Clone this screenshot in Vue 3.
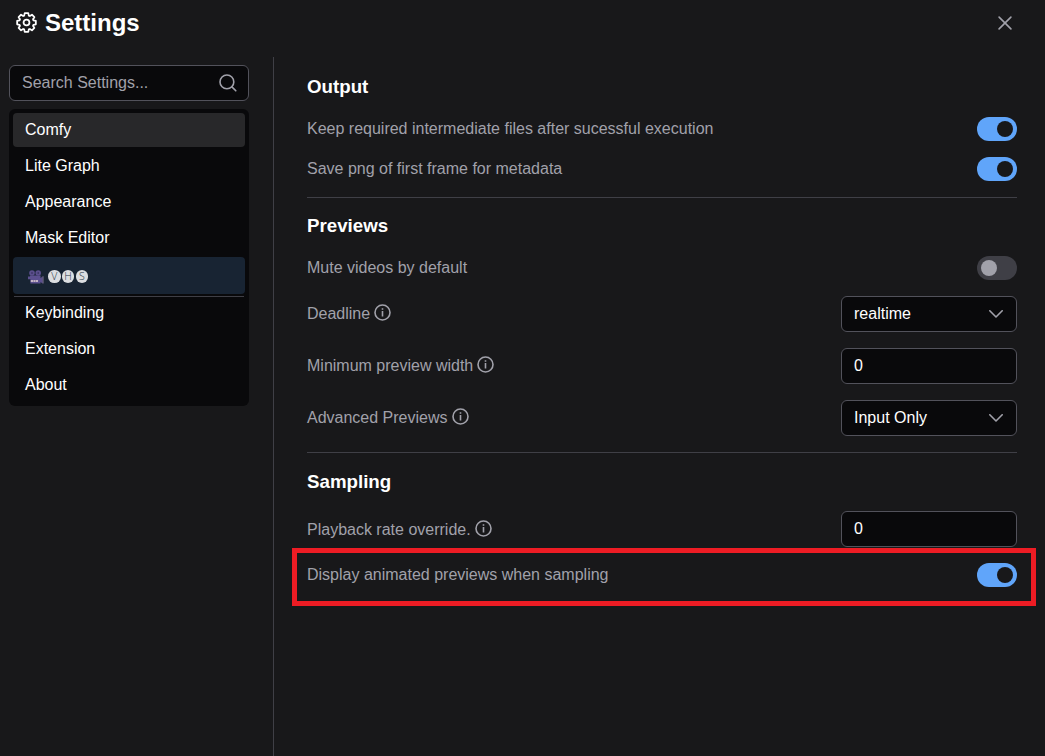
<script setup>
const before = ['Comfy', 'Lite Graph', 'Appearance', 'Mask Editor']
const after = ['Keybinding', 'Extension', 'About']
const groups = [
  {
    title: 'Output',
    rows: [
      { label: 'Keep required intermediate files after sucessful execution', type: 'toggle', on: true },
      { label: 'Save png of first frame for metadata', type: 'toggle', on: true },
    ],
  },
  {
    title: 'Previews',
    rows: [
      { label: 'Mute videos by default', type: 'toggle', on: false },
      { label: 'Deadline', type: 'select', value: 'realtime', info: true },
      { label: 'Minimum preview width', type: 'input', value: '0', info: true },
      { label: 'Advanced Previews', type: 'select', value: 'Input Only', info: true },
    ],
  },
  {
    title: 'Sampling',
    rows: [
      { label: 'Playback rate override.', type: 'input', value: '0', info: true },
      { label: 'Display animated previews when sampling', type: 'toggle', on: true, marked: true },
    ],
  },
]
</script>

<template>
  <div class="dialog">
    <header class="header">
      <svg class="gear" viewBox="0 0 20 20" fill="none" stroke="#fff" stroke-width="1.7" stroke-linejoin="round">
        <path d="M8.3 1.1h3.4l.5 2.3 1 .4 2-1.2 2.3 2.3-1.3 2 .4 1 2.3.5v3.3l-2.3.5-.4 1 1.3 2-2.3 2.3-2-1.3-1 .4-.5 2.3H8.3l-.5-2.3-1-.4-2 1.3-2.3-2.3 1.3-2-.4-1-2.3-.5V8.4l2.3-.5.4-1-1.3-2 2.3-2.3 2 1.2 1-.4z" />
        <circle cx="10" cy="10" r="2.8" />
      </svg>
      <h2 class="title">Settings</h2>
      <svg class="close" viewBox="0 0 14 14" fill="none" stroke="#a1a1aa" stroke-width="1.6" stroke-linecap="round">
        <path d="M1.1 1.1l11.8 11.8M12.9 1.1L1.1 12.9" />
      </svg>
    </header>
    <div class="body">
      <aside class="sidebar">
        <div class="search">
          <span>Search Settings...</span>
          <svg class="lens" viewBox="0 0 18 18" fill="none" stroke="#a1a1aa" stroke-width="1.6" stroke-linecap="round">
            <circle cx="7.9" cy="7.9" r="6.9" />
            <path d="M12.9 12.9l3.9 3.9" />
          </svg>
        </div>
        <ul class="list">
          <li v-for="(name, i) in before" :key="name" class="item" :class="{ focused: i === 0 }">{{ name }}</li>
          <li class="item vhs">
            <svg class="camera" viewBox="0 0 16 14">
              <circle cx="4" cy="3" r="2.8" fill="#5a4e8c" />
              <circle cx="10.2" cy="3" r="2.8" fill="#5a4e8c" />
              <circle cx="4" cy="3" r=".8" fill="#2e2b52" />
              <circle cx="10.2" cy="3" r=".8" fill="#2e2b52" />
              <path d="M0 6.5h2v-1h10.5v8H2.4V9.2H0zM12.5 8l2.2-1.4v6.8L12.5 12z" fill="#5c508f" />
              <path d="M14.6 6.2h.9v7.4h-.9z" fill="#80768f" />
              <path d="M2.8 10h7.2v2H2.8z" fill="#c5b4c6" />
              <path d="M5 10h.5v2H5zM7.4 10h.5v2h-.5z" fill="#76658b" />
            </svg>
            <span v-for="c in 'VHS'" :key="c" class="disc">{{ c }}</span>
          </li>
          <li class="rule"></li>
          <li v-for="name in after" :key="name" class="item">{{ name }}</li>
        </ul>
      </aside>
      <main class="content">
        <section v-for="g in groups" :key="g.title" class="group">
          <h3 class="heading">{{ g.title }}</h3>
          <div v-for="r in g.rows" :key="r.label" class="row" :class="{ marked: r.marked }">
            <div class="label">
              <span>{{ r.label }}</span>
              <svg v-if="r.info" class="info" viewBox="0 0 17 17">
                <circle cx="8.5" cy="8.5" r="7.5" fill="none" stroke="#a1a1aa" stroke-width="1.6" />
                <path d="M7.7 4.2h1.6v1.6H7.7zM7.7 7.1h1.6v5.3H7.7z" fill="#a1a1aa" />
              </svg>
            </div>
            <div v-if="r.type === 'toggle'" class="toggle" :class="{ on: r.on }"><i class="knob"></i></div>
            <div v-else class="field">
              <span>{{ r.value }}</span>
              <svg v-if="r.type === 'select'" class="chevron" viewBox="0 0 14 8" fill="none" stroke="#a1a1aa" stroke-width="1.6" stroke-linecap="round" stroke-linejoin="round">
                <path d="M.8 .8L7 7 13.2 .8" />
              </svg>
            </div>
          </div>
        </section>
      </main>
    </div>
  </div>
</template>

<style>
body {
  background: #18181a;
}
</style>

<style scoped>
.dialog {
  display: flex;
  flex-direction: column;
  height: 756px;
  overflow: hidden;
  box-sizing: border-box;
  background: #18181a;
  color: #fff;
  font: 16px/20px "Liberation Sans", Arial, sans-serif;
}
.dialog * {
  box-sizing: border-box;
}
.header {
  display: flex;
  align-items: center;
  height: 57px;
  padding: 0 33px 12px 16px;
}
.gear {
  width: 21px;
  height: 21px;
}
.title {
  margin: 0 auto 0 8px;
  font-size: 24px;
  line-height: 28px;
  font-weight: 700;
}
.close {
  width: 14px;
  height: 14px;
}
.body {
  display: flex;
  flex: 1;
}
.sidebar {
  width: 274px;
  padding: 8px 24px 0 9px;
  border-right: 1px solid #3f3f46;
}
.search {
  display: flex;
  align-items: center;
  justify-content: space-between;
  height: 36px;
  padding: 0 11px 0 12px;
  border: 1px solid #52525b;
  border-radius: 6px;
  background: #09090b;
  color: #a1a1aa;
}
.lens {
  width: 18px;
  height: 18px;
}
.list {
  display: flex;
  flex-direction: column;
  gap: 2px;
  height: 297px;
  margin: 8px 0 0;
  padding: 4px;
  border-radius: 6px;
  background: #09090b;
  list-style: none;
}
.item {
  display: flex;
  align-items: center;
  height: 34px;
  padding: 0 12px;
  border-radius: 4px;
}
.focused {
  background: #28282a;
}
.vhs {
  height: 37px;
  padding: 2px 0 0 15px;
  background: #182433;
}
.camera {
  width: 16px;
  height: 14px;
  margin-right: 4px;
}
.disc {
  width: 12.6px;
  height: 12.6px;
  margin-right: 1.2px;
  border-radius: 50%;
  background: #dcdee1;
  color: #283443;
  font: 300 10.5px/12.6px "Open Sans", "Noto Sans", sans-serif;
  text-align: center;
}
.rule {
  height: 1px;
  margin: 0 1px -3px;
  background: #3f3f46;
}
.content {
  flex: 1;
  padding: 16px 28px 0 33px;
}
.group {
  display: flex;
  flex-direction: column;
  gap: 16px;
}
.group + .group {
  margin-top: 16px;
  padding-top: 14px;
  border-top: 1px solid #3f3f46;
}
.heading {
  margin: 0 0 2px;
  padding-top: 2px;
  font-size: 18.72px;
  line-height: 24px;
  height: 26px;
}
.group:last-child .heading {
  padding-top: 3px;
}
.row {
  position: relative;
  display: flex;
  align-items: center;
  justify-content: space-between;
}
.label {
  display: flex;
  align-items: center;
  gap: 4px;
  color: #a1a1aa;
  padding-bottom: 1px;
}
.group:last-child .heading + .row .label {
  padding: 1px 0 0;
}
.info {
  width: 17px;
  height: 17px;
  margin-top: -3px;
}
.toggle {
  width: 40px;
  height: 24px;
  padding: 4px;
  border-radius: 12px;
  background: #3f3f46;
}
.knob {
  display: block;
  width: 16px;
  height: 16px;
  border-radius: 50%;
  background: #a1a1aa;
}
.on {
  background: #60a5fa;
}
.on .knob {
  margin-left: auto;
  background: #18181a;
}
.field {
  display: flex;
  align-items: center;
  justify-content: space-between;
  width: 176px;
  height: 36px;
  padding: 0 13px 0 12px;
  border: 1px solid #52525b;
  border-radius: 6px;
  background: #09090b;
}
.chevron {
  width: 14px;
  height: 8px;
}
.marked::after {
  content: "";
  box-sizing: border-box;
  position: absolute;
  top: -15px;
  left: -15px;
  width: 744px;
  height: 58px;
  border: 5px solid #ed1c24;
}
</style>
